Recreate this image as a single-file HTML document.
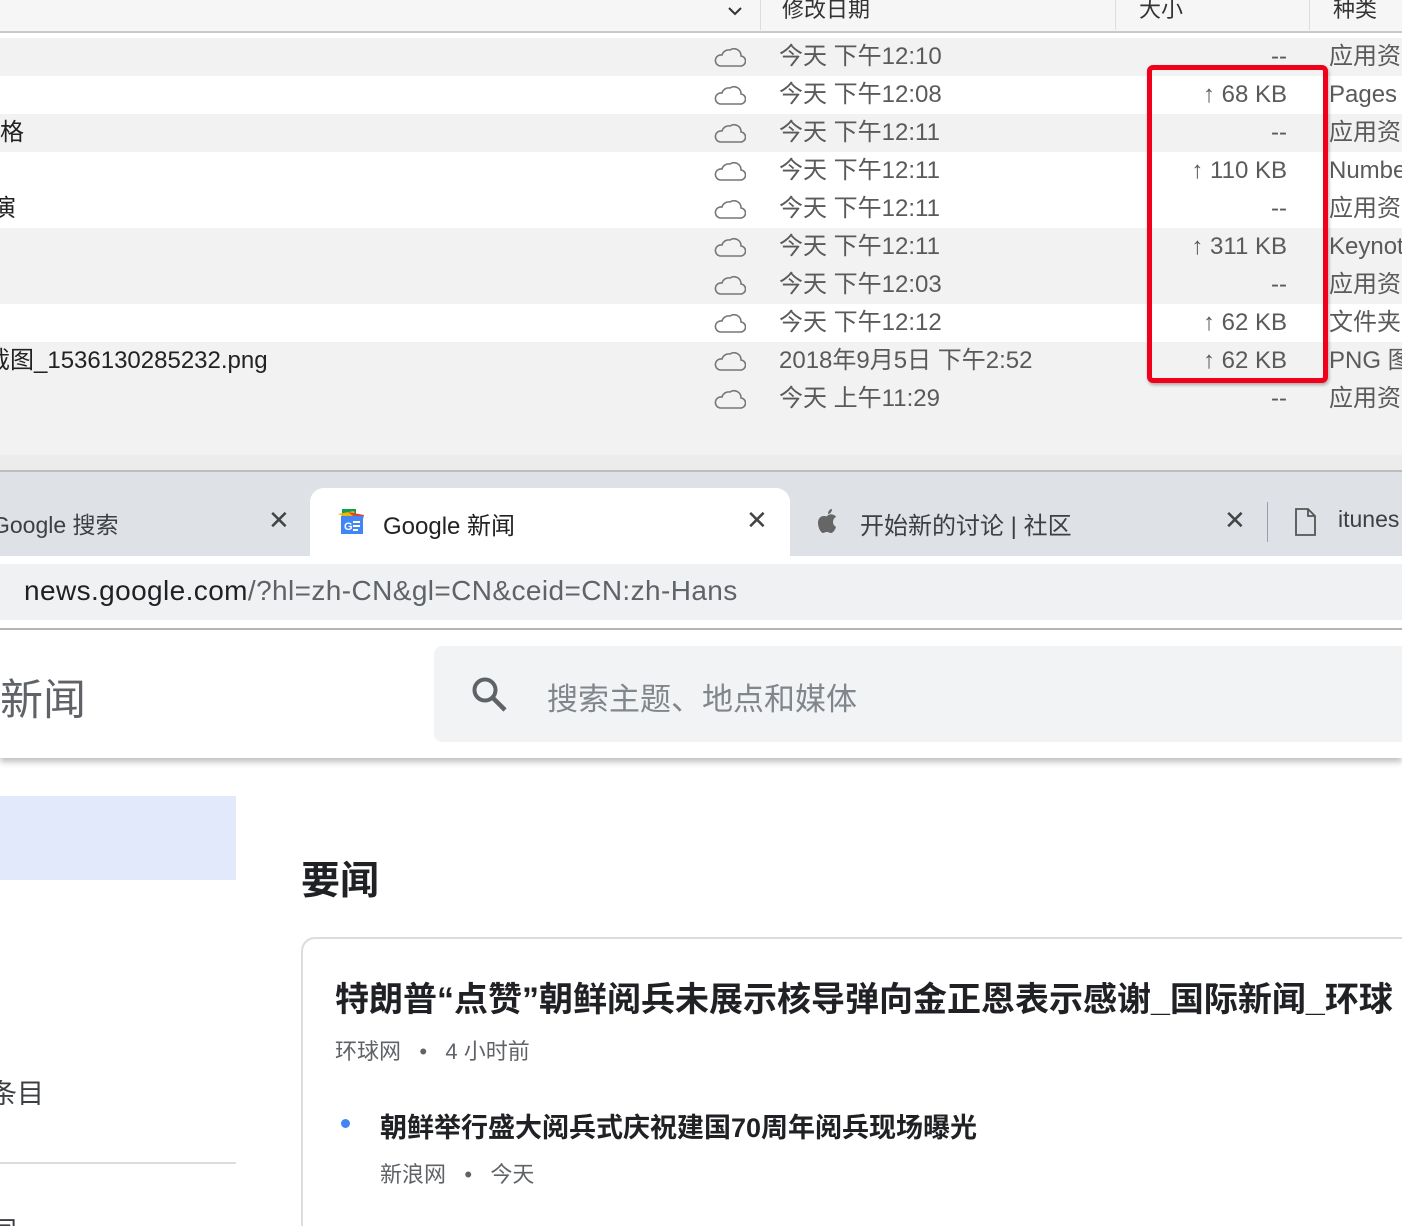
<!DOCTYPE html>
<html style="overflow:hidden;width:1402px;height:1226px"><head><meta charset="utf-8"><style>
*{margin:0;padding:0;box-sizing:border-box}
body{width:1402px;height:1226px;overflow:hidden;position:relative;background:#fff;font-family:"Liberation Sans","Noto Sans CJK SC",sans-serif}
.a{position:absolute;white-space:nowrap}
.row{position:absolute;left:0;width:1402px;height:38px}
.dt{position:absolute;left:779px;font-size:24px;color:#5a5a5a;line-height:38px;white-space:nowrap}
.sz{position:absolute;right:115px;font-size:24px;color:#5a5a5a;line-height:38px;text-align:right;white-space:nowrap}
.kd{position:absolute;left:1329px;font-size:24px;color:#5a5a5a;line-height:38px;white-space:nowrap}
.cl{position:absolute;left:714px;top:7px}
</style></head><body>
<div class="a" style="left:0;top:0;width:1402px;height:33px;background:#f6f6f6;border-bottom:2px solid #c9c9c9"></div>
<div class="a" style="left:760px;top:0;width:1px;height:30px;background:#ddd"></div>
<div class="a" style="left:1115px;top:0;width:1px;height:30px;background:#ddd"></div>
<div class="a" style="left:1309px;top:0;width:1px;height:30px;background:#ddd"></div>
<svg class="a" style="left:727px;top:5px" width="16" height="12"><path d="M2 3 L8 9 L14 3" fill="none" stroke="#333" stroke-width="2"/></svg>
<div class="a" style="left:782px;top:-8px;font-size:22px;color:#333">修改日期</div>
<div class="a" style="left:1139px;top:-8px;font-size:22px;color:#333">大小</div>
<div class="a" style="left:1333px;top:-8px;font-size:22px;color:#333">种类</div>
<div class="a" style="left:0;top:35px;width:1402px;height:3px;background:#fff"></div>

<div class="row" style="top:38px;background:#f2f2f2"></div>
<div class="row" style="top:76px;background:#fff"></div>
<div class="row" style="top:114px;background:#f2f2f2"></div>
<div class="row" style="top:152px;background:#fff"></div>
<div class="row" style="top:190px;background:#fff"></div>
<div class="row" style="top:228px;background:#f2f2f2"></div>
<div class="row" style="top:266px;background:#f2f2f2"></div>
<div class="row" style="top:304px;background:#fff"></div>
<div class="a" style="left:0;top:342px;width:1402px;height:113px;background:#f2f2f2"></div>
<div class="a" style="left:0;top:455px;width:1402px;height:16px;background:#ececec"></div>
<div class="a" style="left:0;top:470px;width:1402px;height:2px;background:#bdbdbd"></div>

<div class="a" style="left:0;top:114px;font-size:24px;line-height:38px;color:#222">格</div>
<div class="a" style="left:-8px;top:190px;font-size:24px;line-height:38px;color:#222">演</div>
<div class="a" style="left:-14px;top:342px;font-size:24px;line-height:38px;color:#222">截图_1536130285232.png</div>

<div class="row" style="top:38px;background:none">
<svg class="cl" width="32" height="24"><path d="M6 21 H26 A5 5 0 0 0 27 11 A7 7 0 0 0 16 5 A7 7 0 0 0 8 10 A5.5 5.5 0 0 0 6 21Z" fill="none" stroke="#777" stroke-width="1.6"/></svg>
<div class="dt">今天 下午12:10</div><div class="sz">--</div><div class="kd">应用资</div></div>
<div class="row" style="top:76px">
<svg class="cl" width="32" height="24"><path d="M6 21 H26 A5 5 0 0 0 27 11 A7 7 0 0 0 16 5 A7 7 0 0 0 8 10 A5.5 5.5 0 0 0 6 21Z" fill="none" stroke="#777" stroke-width="1.6"/></svg>
<div class="dt">今天 下午12:08</div><div class="sz">↑ 68 KB</div><div class="kd">Pages</div></div>
<div class="row" style="top:114px">
<svg class="cl" width="32" height="24"><path d="M6 21 H26 A5 5 0 0 0 27 11 A7 7 0 0 0 16 5 A7 7 0 0 0 8 10 A5.5 5.5 0 0 0 6 21Z" fill="none" stroke="#777" stroke-width="1.6"/></svg>
<div class="dt">今天 下午12:11</div><div class="sz">--</div><div class="kd">应用资</div></div>
<div class="row" style="top:152px">
<svg class="cl" width="32" height="24"><path d="M6 21 H26 A5 5 0 0 0 27 11 A7 7 0 0 0 16 5 A7 7 0 0 0 8 10 A5.5 5.5 0 0 0 6 21Z" fill="none" stroke="#777" stroke-width="1.6"/></svg>
<div class="dt">今天 下午12:11</div><div class="sz">↑ 110 KB</div><div class="kd">Numbe</div></div>
<div class="row" style="top:190px">
<svg class="cl" width="32" height="24"><path d="M6 21 H26 A5 5 0 0 0 27 11 A7 7 0 0 0 16 5 A7 7 0 0 0 8 10 A5.5 5.5 0 0 0 6 21Z" fill="none" stroke="#777" stroke-width="1.6"/></svg>
<div class="dt">今天 下午12:11</div><div class="sz">--</div><div class="kd">应用资</div></div>
<div class="row" style="top:228px">
<svg class="cl" width="32" height="24"><path d="M6 21 H26 A5 5 0 0 0 27 11 A7 7 0 0 0 16 5 A7 7 0 0 0 8 10 A5.5 5.5 0 0 0 6 21Z" fill="none" stroke="#777" stroke-width="1.6"/></svg>
<div class="dt">今天 下午12:11</div><div class="sz">↑ 311 KB</div><div class="kd">Keynot</div></div>
<div class="row" style="top:266px">
<svg class="cl" width="32" height="24"><path d="M6 21 H26 A5 5 0 0 0 27 11 A7 7 0 0 0 16 5 A7 7 0 0 0 8 10 A5.5 5.5 0 0 0 6 21Z" fill="none" stroke="#777" stroke-width="1.6"/></svg>
<div class="dt">今天 下午12:03</div><div class="sz">--</div><div class="kd">应用资</div></div>
<div class="row" style="top:304px">
<svg class="cl" width="32" height="24"><path d="M6 21 H26 A5 5 0 0 0 27 11 A7 7 0 0 0 16 5 A7 7 0 0 0 8 10 A5.5 5.5 0 0 0 6 21Z" fill="none" stroke="#777" stroke-width="1.6"/></svg>
<div class="dt">今天 下午12:12</div><div class="sz">↑ 62 KB</div><div class="kd">文件夹</div></div>
<div class="row" style="top:342px">
<svg class="cl" width="32" height="24"><path d="M6 21 H26 A5 5 0 0 0 27 11 A7 7 0 0 0 16 5 A7 7 0 0 0 8 10 A5.5 5.5 0 0 0 6 21Z" fill="none" stroke="#777" stroke-width="1.6"/></svg>
<div class="dt">2018年9月5日 下午2:52</div><div class="sz">↑ 62 KB</div><div class="kd">PNG 图</div></div>
<div class="row" style="top:380px">
<svg class="cl" width="32" height="24"><path d="M6 21 H26 A5 5 0 0 0 27 11 A7 7 0 0 0 16 5 A7 7 0 0 0 8 10 A5.5 5.5 0 0 0 6 21Z" fill="none" stroke="#777" stroke-width="1.6"/></svg>
<div class="dt">今天 上午11:29</div><div class="sz">--</div><div class="kd">应用资</div></div>

<div class="a" style="left:1147px;top:65px;width:181px;height:318px;border:5px solid #f0001a;border-radius:6px;box-shadow:1px 2px 3px rgba(0,0,0,.3)"></div>

<div class="a" style="left:0;top:472px;width:1402px;height:84px;background:#dee1e6"></div>
<div class="a" style="left:310px;top:488px;width:480px;height:70px;background:#fff;border-radius:14px 14px 0 0"></div>
<div class="a" style="left:-8px;top:506px;font-size:23px;color:#3c4043">Google 搜索</div>
<div class="a" style="left:268px;top:505px;font-size:26px;color:#444">✕</div>
<svg class="a" style="left:336px;top:507px" width="30" height="30">
<rect x="6" y="2" width="14" height="10" fill="#0f9d58"/>
<path d="M2 7 L18 4 L20 14 Z" fill="#f4b400"/><path d="M12 5 L28 8 L26 16Z" fill="#db4437"/>
<rect x="5" y="9" width="22" height="18" fill="#4285f4"/>
<text x="8" y="23" font-size="11" fill="#fff" font-family="Liberation Sans" font-weight="bold">G</text>
<rect x="17" y="14" width="7" height="2" fill="#fff"/><rect x="17" y="18" width="7" height="2" fill="#fff"/><rect x="17" y="22" width="5" height="2" fill="#fff"/></svg>
<div class="a" style="left:383px;top:506px;font-size:24px;color:#222">Google 新闻</div>
<div class="a" style="left:746px;top:505px;font-size:26px;color:#444">✕</div>
<svg class="a" style="left:817px;top:508px" width="22" height="26"><path d="M11 7 C13 6 15 6 17 7 C19 8 19 9 19 9 C17 10 16 12 16 14 C16 17 18 18 19 19 C18 22 16 25 14 25 C12 25 12 24 10 24 C8 24 7 25 6 25 C4 25 1 20 1 15 C1 10 4 8 7 8 C9 8 10 9 11 7Z M11 6 C11 3 13 1 15 1 C15 4 13 6 11 6Z" fill="#666"/></svg>
<div class="a" style="left:860px;top:506px;font-size:24px;color:#3c4043">开始新的讨论 | 社区</div>
<div class="a" style="left:1224px;top:505px;font-size:26px;color:#444">✕</div>
<div class="a" style="left:1267px;top:502px;width:1px;height:40px;background:#9aa0a6"></div>
<svg class="a" style="left:1294px;top:507px" width="24" height="30"><path d="M2 2 H14 L21 9 V28 H2 Z M14 2 V9 H21" fill="none" stroke="#555" stroke-width="1.8"/></svg>
<div class="a" style="left:1338px;top:506px;font-size:23px;color:#3c4043">itunes</div>

<div class="a" style="left:0;top:556px;width:1402px;height:72px;background:#fff"></div>
<div class="a" style="left:0;top:564px;width:1402px;height:56px;background:#eff1f3"></div>
<div class="a" style="left:24px;top:575px;font-size:28px;letter-spacing:0.4px;color:#202124">news.google.com<span style="color:#5f6368">/?hl=zh-CN&amp;gl=CN&amp;ceid=CN:zh-Hans</span></div>
<div class="a" style="left:0;top:628px;width:1402px;height:2px;background:#b8b8b8"></div>

<div class="a" style="left:0;top:630px;width:1402px;height:128px;background:#fff;box-shadow:0 4px 6px rgba(0,0,0,.25)"></div>
<div class="a" style="left:0;top:666px;font-size:43px;color:#5f6368">新闻</div>
<div class="a" style="left:434px;top:646px;width:980px;height:96px;background:#f1f3f4;border-radius:8px"></div>
<svg class="a" style="left:470px;top:675px" width="40" height="40"><circle cx="15" cy="15" r="10.5" fill="none" stroke="#5f6368" stroke-width="4"/><path d="M23 23 L35 35" stroke="#5f6368" stroke-width="4.5"/></svg>
<div class="a" style="left:547px;top:674px;font-size:31px;color:#80868b">搜索主题、地点和媒体</div>

<div class="a" style="left:0;top:796px;width:236px;height:84px;background:#e1e9fb"></div>
<div class="a" style="left:-10px;top:1072px;font-size:27px;color:#3c4043">条目</div>
<div class="a" style="left:0;top:1162px;width:236px;height:2px;background:#dadce0"></div>
<div class="a" style="left:-10px;top:1210px;font-size:27px;color:#3c4043">闻</div>
<div class="a" style="left:301px;top:850px;font-size:39px;font-weight:bold;color:#202124">要闻</div>
<div class="a" style="left:301px;top:937px;width:1200px;height:320px;border:2px solid #dadce0;border-radius:14px"></div>
<div class="a" style="left:335px;top:972px;font-size:34px;font-weight:bold;color:#202124">特朗普“点赞”朝鲜阅兵未展示核导弹向金正恩表示感谢_国际新闻_环球</div>
<div class="a" style="left:335px;top:1034px;font-size:22px;color:#5f6368">环球网 &nbsp;&nbsp;•&nbsp;&nbsp; 4 小时前</div>
<div class="a" style="left:341px;top:1119px;width:9px;height:9px;border-radius:50%;background:#4285f4"></div>
<div class="a" style="left:380px;top:1106px;font-size:27px;font-weight:bold;color:#202124">朝鲜举行盛大阅兵式庆祝建国70周年阅兵现场曝光</div>
<div class="a" style="left:380px;top:1157px;font-size:22px;color:#5f6368">新浪网 &nbsp;&nbsp;•&nbsp;&nbsp; 今天</div>
</body></html>
